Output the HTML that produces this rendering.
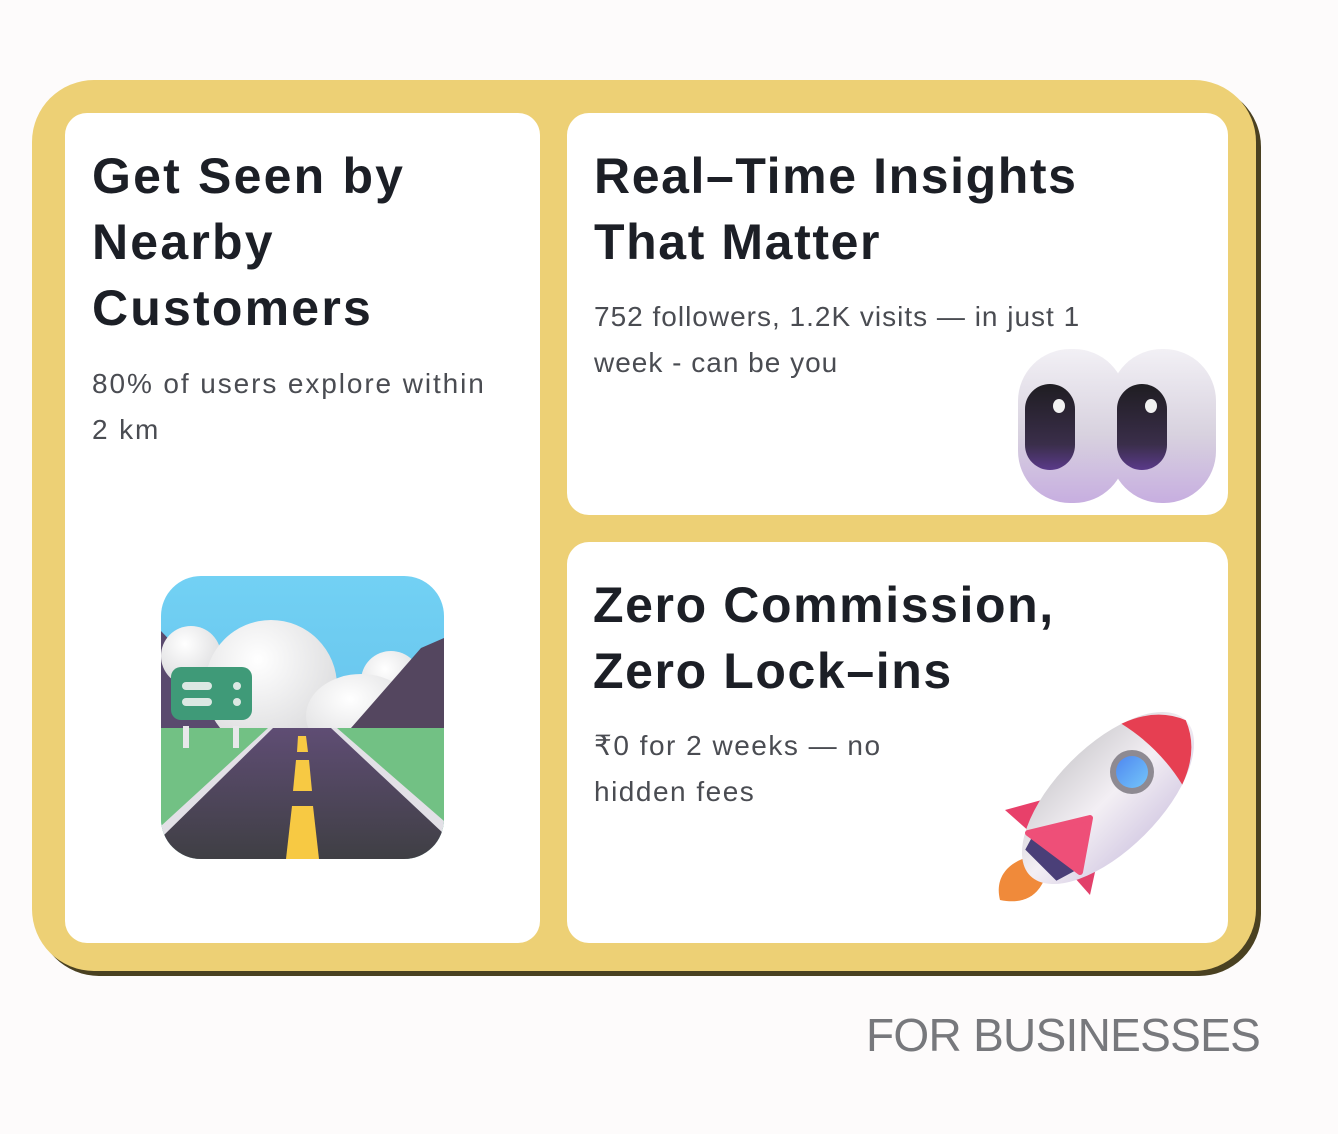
<!DOCTYPE html>
<html><head><meta charset="utf-8"><style>
*{margin:0;padding:0;box-sizing:border-box}
body{width:1338px;height:1134px;background:#fdfbfb;position:relative;overflow:hidden;font-family:"Liberation Sans",sans-serif}
.shadow{position:absolute;left:37px;top:85px;width:1224px;height:891px;border-radius:62px;background:#4a4121}
.frame{position:absolute;left:32px;top:80px;width:1224px;height:891px;border-radius:62px;background:#edd075}
.card{position:absolute;background:#fff;border-radius:22px}
h2{position:absolute;font-size:50px;font-weight:700;color:#1c1f26;line-height:66px;letter-spacing:1.6px;white-space:nowrap}
p{position:absolute;font-size:28px;color:#4a4c52;line-height:46px;letter-spacing:1.9px;white-space:nowrap}
.foot{position:absolute;left:866px;top:1008px;font-size:46px;color:#77787c;letter-spacing:-0.7px}
svg{position:absolute}
</style></head><body>
<div class="shadow"></div>
<div class="frame"></div>
<div class="card" style="left:65px;top:113px;width:475px;height:830px"></div>
<div class="card" style="left:567px;top:113px;width:661px;height:402px"></div>
<div class="card" style="left:567px;top:542px;width:661px;height:401px"></div>

<h2 style="left:92px;top:143px;letter-spacing:2.2px">Get Seen by<br>Nearby<br>Customers</h2>
<p style="left:92px;top:361px">80% of users explore within<br>2 km</p>

<h2 style="left:594px;top:143px">Real–Time Insights<br>That Matter</h2>
<p style="left:594px;top:294px;letter-spacing:1px">752 followers, 1.2K visits — in just 1<br>week - can be you</p>

<h2 style="left:593px;top:572px">Zero Commission,<br>Zero Lock–ins</h2>
<p style="left:594px;top:723px;letter-spacing:1.5px">₹0 for 2 weeks — no<br>hidden fees</p>

<div class="foot">FOR BUSINESSES</div>

<!-- road -->
<svg style="left:161px;top:576px" width="283" height="283" viewBox="0 0 283 283">
<defs>
<clipPath id="rc"><rect width="283" height="283" rx="40"/></clipPath>
<linearGradient id="sky" x1="0" y1="0" x2="0" y2="1"><stop offset="0" stop-color="#72d1f4"/><stop offset="1" stop-color="#5fb9e6"/></linearGradient>
<linearGradient id="rd" x1="0" y1="0" x2="0" y2="1"><stop offset="0" stop-color="#5f4d74"/><stop offset="1" stop-color="#3f3f44"/></linearGradient>
<radialGradient id="cl" cx="0.4" cy="0.3" r="0.8"><stop offset="0" stop-color="#fff"/><stop offset="1" stop-color="#d6d6d8"/></radialGradient>
</defs>
<g clip-path="url(#rc)">
<rect width="283" height="283" fill="url(#sky)"/>
<path d="M0 55 L100 160 L0 160Z" fill="#5a4a6e"/>
<circle cx="30" cy="80" r="30" fill="url(#cl)"/>
<circle cx="110" cy="110" r="66" fill="url(#cl)"/>
<circle cx="230" cy="105" r="30" fill="url(#cl)"/>
<ellipse cx="200" cy="140" rx="55" ry="42" fill="url(#cl)"/>
<path d="M283 62 L260 72 L190 152 L283 152Z" fill="#54465f"/>
<rect x="0" y="152" width="283" height="131" fill="#72c184"/>
<path d="M107 152 L176 152 L283 245 L283 283 L0 283 L0 250Z" fill="#e2e0e6"/>
<path d="M112 152 L170 152 L283 258 L283 283 L0 283 L0 262Z" fill="url(#rd)"/>
<path d="M137 160 L145 160 L147 176 L136 176Z" fill="#f7c943"/>
<path d="M135 184 L148 184 L151 215 L132 215Z" fill="#f7c943"/>
<path d="M131 230 L152 230 L158 283 L125 283Z" fill="#f7c943"/>
<rect x="22" y="150" width="6" height="22" fill="#e8e8ea"/>
<rect x="72" y="150" width="6" height="22" fill="#e8e8ea"/>
<rect x="10" y="91" width="81" height="53" rx="10" fill="#3f9a78"/>
<rect x="21" y="106" width="30" height="8" rx="4" fill="#dce8e3"/>
<rect x="21" y="122" width="30" height="8" rx="4" fill="#dce8e3"/>
<circle cx="76" cy="110" r="4" fill="#dce8e3"/><circle cx="76" cy="126" r="4" fill="#dce8e3"/>
</g>
</svg>

<!-- eyes -->
<svg style="left:1015px;top:346px" width="204" height="160" viewBox="0 0 204 160">
<defs>
<linearGradient id="eb" x1="0" y1="0" x2="0" y2="1"><stop offset="0" stop-color="#f2f0f5"/><stop offset="0.55" stop-color="#d8d2df"/><stop offset="1" stop-color="#c7aee0"/></linearGradient>
<linearGradient id="pu" x1="0" y1="0" x2="0" y2="1"><stop offset="0" stop-color="#1f1d22"/><stop offset="0.7" stop-color="#3a2e4a"/><stop offset="1" stop-color="#5a3a8a"/></linearGradient>
</defs>
<rect x="3" y="3" width="108" height="154" rx="52" fill="url(#eb)"/>
<rect x="95" y="3" width="106" height="154" rx="52" fill="url(#eb)"/>
<rect x="10" y="38" width="50" height="86" rx="25" fill="url(#pu)"/>
<rect x="102" y="38" width="50" height="86" rx="25" fill="url(#pu)"/>
<ellipse cx="44" cy="60" rx="6" ry="7" fill="#f2f2f2"/>
<ellipse cx="136" cy="60" rx="6" ry="7" fill="#f2f2f2"/>
</svg>

<!-- rocket -->
<svg style="left:990px;top:700px" width="215" height="215" viewBox="0 0 215 215">
<defs>
<linearGradient id="bd" x1="0" y1="0" x2="0" y2="1"><stop offset="0" stop-color="#d6d4d8"/><stop offset="0.5" stop-color="#f3eff4"/><stop offset="1" stop-color="#d9d0e6"/></linearGradient>
<linearGradient id="wn" x1="0" y1="0" x2="1" y2="1"><stop offset="0" stop-color="#4f87f0"/><stop offset="1" stop-color="#74c6fa"/></linearGradient>
</defs>
<path d="M10 200 C5 180 15 165 35 158 L55 178 C48 195 35 205 10 200Z" fill="#f08a3a"/>
<path d="M15 110 L70 95 L60 150Z" fill="#e8406a"/>
<path d="M100 195 L112 140 L60 150Z" fill="#e2406a"/>
<g transform="translate(118 98) rotate(-45)">
<ellipse cx="0" cy="0" rx="110" ry="52" fill="url(#bd)"/>
<path d="M-95 -22 L-75 -28 L-75 28 L-95 22Z" fill="#4a3f78"/>
<path d="M62 -43 Q98 -30 110 0 Q98 30 62 43 Q72 0 62 -43Z" fill="#e63f52"/>
</g>
<path d="M38 133 L100 118 L90 172 Z" fill="#ee4f78" stroke="#ee4f78" stroke-width="6" stroke-linejoin="round"/>
<circle cx="142" cy="72" r="22" fill="#8e8a92"/>
<circle cx="142" cy="72" r="16" fill="url(#wn)"/>
</svg>
</body></html>
